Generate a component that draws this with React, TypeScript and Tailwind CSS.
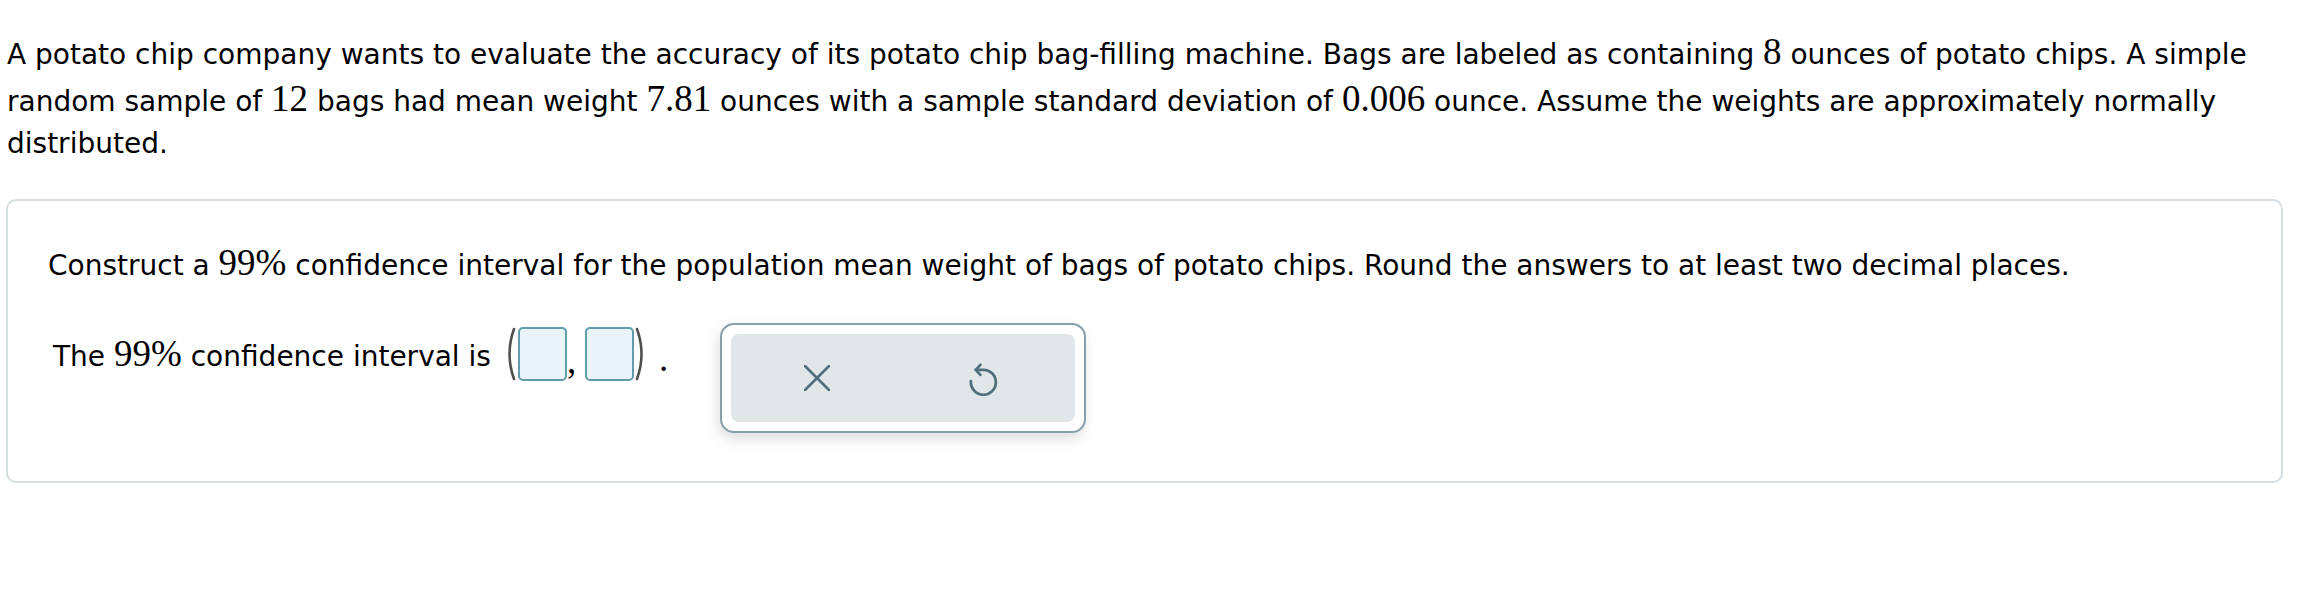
import React from 'react'

const sans = 'font-["DejaVu_Sans",Verdana,sans-serif]'
const serif = 'font-["Liberation_Serif","Times_New_Roman",serif]'

function M({ children }: { children: React.ReactNode }) {
  return <span className={`${serif} text-[37px] leading-[0px]`}>{children}</span>
}

function AnswerBox() {
  return (
    <div className="h-[54px] w-[49px] rounded-[5px] border-2 border-[#5f9dab] bg-[#e9f4fa]" />
  )
}

function Paren({ side }: { side: 'left' | 'right' }) {
  const d = side === 'left' ? 'M11 2 Q2 27 11 52' : 'M3 2 Q12 27 3 52'
  return (
    <svg width="14" height="54" viewBox="0 0 14 54" className="shrink-0">
      <path d={d} fill="none" stroke="#505050" strokeWidth="2.6" strokeLinecap="round" />
    </svg>
  )
}

function CloseIcon() {
  return (
    <svg width="26" height="26" viewBox="0 0 26 26">
      <path d="M1 1 L25 25 M25 1 L1 25" stroke="#4f6f7c" strokeWidth="2.6" strokeLinecap="round" />
    </svg>
  )
}

function ResetIcon() {
  return (
    <svg width="32" height="36" viewBox="0 0 32 36">
      <path
        d="M7.7 9.8 H15.3 A12.5 12.5 0 1 1 2.9 21.2"
        fill="none"
        stroke="#4f6f7c"
        strokeWidth="2.7"
        strokeLinecap="round"
      />
      <path
        d="M12.4 4.8 L7.7 9.8 L12.4 14.8"
        fill="none"
        stroke="#4f6f7c"
        strokeWidth="2.7"
        strokeLinecap="round"
        strokeLinejoin="round"
      />
    </svg>
  )
}

export default function App() {
  return (
    <div className={`${sans} h-[595px] w-[2298px] bg-white text-[28px] text-black`}>
      <div className="pl-[7px] pt-[36px]">
        <div className="h-[38px] leading-[38px] whitespace-nowrap">
          A potato chip company wants to evaluate the accuracy of its potato chip bag-filling machine. Bags are
          labeled as containing <M>8</M> ounces of potato chips. A simple
        </div>
        <div className="mt-[9px] h-[38px] leading-[38px] whitespace-nowrap">
          random sample of <M>12</M> bags had mean weight <M>7.81</M> ounces with a sample standard deviation of{' '}
          <M>0.006</M> ounce. Assume the weights are approximately normally
        </div>
        <div className="mt-[4px] h-[38px] leading-[38px] whitespace-nowrap">distributed.</div>
      </div>

      <div className="mt-[36px] ml-[6px] w-[2277px] rounded-[10px] border-2 border-[#d6dee2] pb-[48px] pl-[40px] pt-[46px]">
        <div className="h-[38px] leading-[38px] whitespace-nowrap">
          Construct a <M>99%</M> confidence interval for the population mean weight of bags of potato chips. Round
          the answers to at least two decimal places.
        </div>

        <div className="mt-[38px] flex items-start">
          <div className="ml-[5px] mt-[4px] flex h-[54px] items-center">
            <span className="mt-[5px] leading-[38px] whitespace-nowrap">
              The <M>99%</M> confidence interval is
            </span>
            <div className="ml-[12px] flex items-center">
              <Paren side="left" />
              <div className="ml-[1px]">
                <AnswerBox />
              </div>
              <span className={`${serif} w-[18px] self-end pb-[2px] text-[37px] leading-none`}>,</span>
              <AnswerBox />
              <Paren side="right" />
              <span className={`${serif} ml-[11px] self-center mt-[8px] text-[37px] leading-none`}>.</span>
            </div>
          </div>

          <div className="ml-[52px] w-[366px] rounded-[14px] border-2 border-[#86a0a9] bg-white p-[9px] shadow-[-2px_6px_14px_rgba(0,0,0,0.13)]">
            <div className="flex h-[88px] items-center rounded-[8px] bg-[#e1e6e9]">
              <div className="flex flex-1 justify-center pl-[2px]">
                <CloseIcon />
              </div>
              <div className="flex flex-1 justify-center pr-[8px]">
                <ResetIcon />
              </div>
            </div>
          </div>
        </div>
      </div>
    </div>
  )
}
